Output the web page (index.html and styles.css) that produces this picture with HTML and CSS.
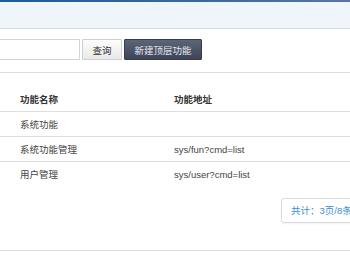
FILE: index.html
```html
<!DOCTYPE html>
<html lang="zh">
<head>
<meta charset="utf-8">
<title>功能管理</title>
<link rel="stylesheet" href="styles.css">
</head>
<body>
<div class="page">
  <div class="topline"></div>
  <div class="band"></div>
  <div class="toolbar">
    <input class="search" type="text">
    <button class="btn btn-light">查询</button>
    <button class="btn btn-dark">新建顶层功能</button>
  </div>
  <table class="grid">
    <thead>
      <tr><th class="c1">功能名称</th><th class="c2">功能地址</th></tr>
    </thead>
    <tbody>
      <tr><td class="c1">系统功能</td><td class="c2"></td></tr>
      <tr><td class="c1">系统功能管理</td><td class="c2">sys/fun?cmd=list</td></tr>
      <tr class="last"><td class="c1">用户管理</td><td class="c2">sys/user?cmd=list</td></tr>
    </tbody>
  </table>
  <div class="pager">
    <div class="pager-box">共计：3页/8条记录</div>
  </div>
</div>
</body>
</html>
```
FILE: styles.css
```css
html, body {
  margin: 0;
  padding: 0;
  background: #fff;
}
body {
  width: 350px;
  height: 280px;
  overflow: hidden;
  font-family: "Liberation Sans", "Noto Sans CJK SC", sans-serif;
  font-size: 9.5px;
  color: #444;
}
.page {
  width: 350px;
}
.topline {
  height: 2px;
  background: linear-gradient(to right, #1b5c93, #3a6aa0 60%, #5a74a8);
}
.band {
  height: 26px;
  background: #eff6fb;
  border-bottom: 1px solid #c9dcea;
}
.toolbar {
  display: flex;
  align-items: center;
  padding: 10px 0 12px;
  border-bottom: 1px solid #dedede;
}
.search {
  box-sizing: border-box;
  width: 82px;
  height: 21px;
  margin: 0 0 0 -2px;
  padding: 0 4px;
  border: 1px solid #d4d4d4;
  background: #fff;
  outline: none;
}
.btn {
  box-sizing: border-box;
  height: 21px;
  padding: 0 8px;
  font-family: inherit;
  font-size: 9.5px;
  border-radius: 1px;
  cursor: pointer;
}
.btn-light {
  width: 40px;
  margin-left: 2px;
  color: #333;
  border: 1px solid #cfcfcf;
  background: linear-gradient(#fdfdfd, #e9e9e9);
}
.btn-dark {
  width: 78px;
  margin-left: 2px;
  color: #e6e8ee;
  border: 1px solid #363c4c;
  background: linear-gradient(#5d6579, #3d4457);
}
.grid {
  width: 350px;
  margin-top: 14px;
  border-collapse: collapse;
}
.grid th,
.grid td {
  height: 24px;
  padding: 0;
  text-align: left;
  vertical-align: middle;
  border-bottom: 1px solid #dedede;
}
.grid th {
  font-weight: bold;
  color: #333;
  height: 23px;
  padding-bottom: 1px;
}
.grid .c1 {
  width: 154px;
  padding-left: 20px;
}
.grid tr.last td {
  border-bottom: none;
}
.pager {
  padding: 12px 0 27px 281px;
  border-bottom: 1px solid #dedede;
}
.pager-box {
  box-sizing: border-box;
  width: 110px;
  height: 25px;
  line-height: 23px;
  padding-left: 9px;
  border: 1px solid #dcdcdc;
  border-radius: 3px;
  box-shadow: 0 1px 2px rgba(0,0,0,0.06);
  color: #3a8ed2;
  white-space: nowrap;
}
```
